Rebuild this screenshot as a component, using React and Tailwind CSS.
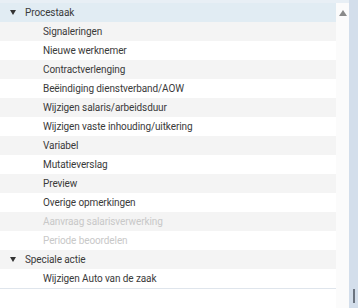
import React from "react";

const groups = [
  {
    title: "Procestaak",
    items: [
      { label: "Signaleringen" },
      { label: "Nieuwe werknemer" },
      { label: "Contractverlenging" },
      { label: "Beëindiging dienstverband/AOW" },
      { label: "Wijzigen salaris/arbeidsduur" },
      { label: "Wijzigen vaste inhouding/uitkering" },
      { label: "Variabel" },
      { label: "Mutatieverslag" },
      { label: "Preview" },
      { label: "Overige opmerkingen" },
      { label: "Aanvraag salarisverwerking", disabled: true },
      { label: "Periode beoordelen", disabled: true },
    ],
  },
  {
    title: "Speciale actie",
    items: [{ label: "Wijzigen Auto van de zaak" }],
  },
];

const Caret = () => (
  <svg width="6" height="5" viewBox="0 0 6 5" className="shrink-0">
    <path d="M0 0 L6 0 L3 5 Z" fill="#333" />
  </svg>
);

export default function App() {
  let row = 0;
  const rows = [];
  groups.forEach((g, gi) => {
    const idx = row++;
    rows.push(
      <div
        key={"g" + gi}
        className={`h-[19px] flex items-center pl-[10px] gap-[9px] ${
          idx === 0 ? "bg-[#e1ecf3]" : idx % 2 === 1 ? "bg-[#f4f4f4]" : "bg-white"
        }`}
      >
        <Caret />
        <span className="text-[#3a3a3a]">{g.title}</span>
      </div>
    );
    g.items.forEach((it, ii) => {
      const i = row++;
      rows.push(
        <div
          key={gi + "-" + ii}
          className={`h-[19px] flex items-center pl-[43px] ${
            i % 2 === 1 ? "bg-[#f4f4f4]" : "bg-white"
          } ${it.disabled ? "text-[#c8c8c8]" : "text-[#3a3a3a]"}`}
        >
          {it.label}
        </div>
      );
    });
  });

  return (
    <div
      className="w-[364px] h-[308px] flex bg-white text-[10px] tracking-[-0.1px] overflow-hidden"
      style={{ fontFamily: "Roboto, 'Liberation Sans', sans-serif" }}
    >
      <div className="w-[336px] flex flex-col">
        <div className="h-[3px] bg-[#e8eff5]" />
        {rows}
        <div className="h-px bg-[#dfe5ec]" />
      </div>
      <div className="w-[13px] bg-[#fbfbfb] flex flex-col items-center">
        <div className="h-[3px] w-full bg-[#e8eff5]" />
        <svg width="8" height="6" viewBox="0 0 8 6" className="mt-[7px]">
          <path d="M0 6 L4 0 L8 6 Z" fill="#8a8a8a" />
        </svg>
      </div>
      <div className="w-[9px] bg-[#d3deeb] flex flex-col justify-end items-center pb-[5px]">
        <div className="w-[2px] h-[14px] bg-[#6b7480] ml-[1px]" />
      </div>
      <div className="flex-1 bg-white" />
    </div>
  );
}
